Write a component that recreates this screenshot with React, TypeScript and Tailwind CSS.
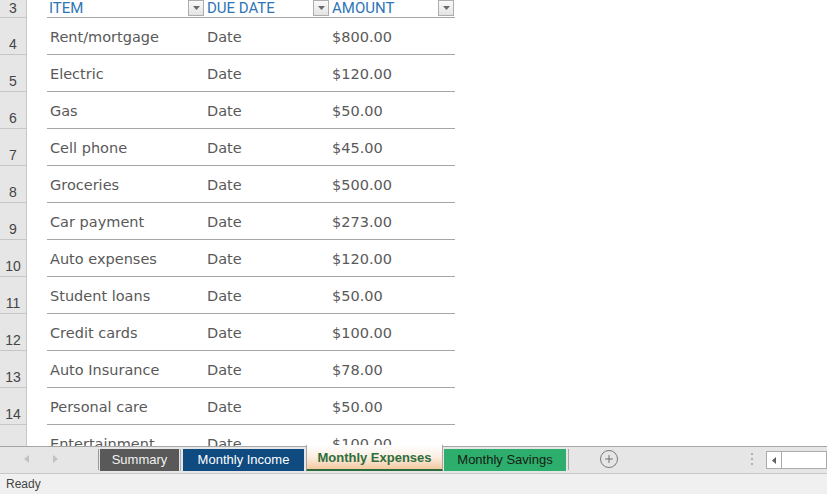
import { Plus } from 'lucide-react'

const rows = [
  { n: 4, item: 'Rent/mortgage', amount: '$800.00' },
  { n: 5, item: 'Electric', amount: '$120.00' },
  { n: 6, item: 'Gas', amount: '$50.00' },
  { n: 7, item: 'Cell phone', amount: '$45.00' },
  { n: 8, item: 'Groceries', amount: '$500.00' },
  { n: 9, item: 'Car payment', amount: '$273.00' },
  { n: 10, item: 'Auto expenses', amount: '$120.00' },
  { n: 11, item: 'Student loans', amount: '$50.00' },
  { n: 12, item: 'Credit cards', amount: '$100.00' },
  { n: 13, item: 'Auto Insurance', amount: '$78.00' },
  { n: 14, item: 'Personal care', amount: '$50.00' },
  { n: 15, item: 'Entertainment', amount: '$100.00' },
]

function FilterButton() {
  return (
    <div className="w-[16px] h-[16px] mb-px border border-[#adadad] bg-gradient-to-b from-[#fafafa] to-[#e4e4e4] flex items-center justify-center shrink-0">
      <svg width="7" height="4" viewBox="0 0 7 4">
        <path d="M0 0 L7 0 L3.5 4 Z" fill="#6a6a6a" />
      </svg>
    </div>
  )
}

function HeaderCell({ label, width }: { label: string; width: string }) {
  return (
    <div className={`${width} h-[18px] flex items-end justify-between pl-[2px] pr-[1px] border-b border-[#a6a6a6]`}>
      <span
        className="text-[15px] leading-[17px] text-[#2e75b6]"
        style={{ fontFamily: 'Roboto, sans-serif' }}
      >
        {label}
      </span>
      <FilterButton />
    </div>
  )
}

function Tab({ label, className }: { label: string; className: string }) {
  return (
    <div className={`h-[22px] flex items-center justify-center text-[13px] ${className}`}>
      {label}
    </div>
  )
}

export default function App() {
  return (
    <div
      className="w-[827px] h-[494px] flex flex-col overflow-hidden bg-white"
      style={{ fontFamily: '"Liberation Sans", Arial, sans-serif' }}
    >
      {/* sheet grid */}
      <div className="h-[446px] overflow-hidden flex flex-col">
        <div className="h-[18px] flex shrink-0">
          <div className="w-[27px] shrink-0 bg-[#e6e6e6] border-r border-b border-[#c6c6c6] flex items-end justify-center text-[14px] leading-none pb-[2px] text-[#444]">
            3
          </div>
          <div className="w-[20px] shrink-0" />
          <HeaderCell label="ITEM" width="w-[158px]" />
          <HeaderCell label="DUE DATE" width="w-[125px]" />
          <HeaderCell label="AMOUNT" width="w-[125px]" />
        </div>
        {rows.map((r) => (
          <div key={r.n} className="h-[37px] flex shrink-0">
            <div className="w-[27px] shrink-0 bg-[#e6e6e6] border-r border-b border-[#c6c6c6] flex items-end justify-center text-[14px] leading-none pb-[3px] text-[#444]">
              {r.n < 15 ? r.n : ''}
            </div>
            <div className="w-[20px] shrink-0" />
            <div
              className="flex border-b border-[#a6a6a6] text-[#595959] text-[14.5px] pt-[3px]"
              style={{ fontFamily: '"DejaVu Sans", sans-serif' }}
            >
              <div className="w-[158px] pl-[3px] flex items-center">{r.item}</div>
              <div className="w-[125px] pl-[2px] flex items-center">Date</div>
              <div className="w-[125px] pl-[2px] flex items-center">{r.amount}</div>
            </div>
          </div>
        ))}
      </div>

      {/* sheet tabs */}
      <div className="h-[28px] shrink-0 bg-[#e6e6e6] flex items-start border-b border-[#c8c8c8] relative">
        <div className="absolute left-0 right-0 top-0 h-px bg-[#a6a6a6]" />
        <div className="w-[98px] h-[26px] flex items-center pl-[24px] gap-[24px]">
          <svg width="5" height="8" viewBox="0 0 5 8">
            <path d="M5 0 L0 4 L5 8 Z" fill="#c2c2c2" />
          </svg>
          <svg width="5" height="8" viewBox="0 0 5 8">
            <path d="M0 0 L5 4 L0 8 Z" fill="#c2c2c2" />
          </svg>
        </div>
        <div className="w-px h-[21px] mt-[3px] bg-[#9a9a9a]" />
        <div className="flex items-start mt-[3px] ml-[1px]">
          <Tab label="Summary" className="w-[79px] bg-[#595959] text-[#f2f2f2]" />
          <div className="w-px h-[22px] mx-[1px] bg-[#b0b0b0]" />
          <Tab label="Monthly Income" className="w-[121px] ml-[1px] bg-[#0f4a80] text-white" />
        </div>
        <div className="relative z-10 -mt-px ml-[2px] w-[137px] h-[26px] border-x border-[#a6a6a6] bg-gradient-to-b from-white via-[#fbeee2] to-[#f3c9a1] border-b-2 border-b-[#2c6b3a] flex items-center justify-center text-[13px] font-bold text-[#2e6e3c] pt-[1px]">
          Monthly Expenses
        </div>
        <div className="flex items-start mt-[3px] ml-[1px]">
          <Tab label="Monthly Savings" className="w-[122px] bg-[#2eae6c] text-[#152015]" />
          <div className="w-px h-[21px] ml-[2px] bg-[#a8a8a8]" />
        </div>
        <div className="ml-[31px] mt-[4px] w-[18px] h-[18px] rounded-full border border-[#7a7a7a] flex items-center justify-center text-[#6e6e6e]">
          <Plus size={12} strokeWidth={2} />
        </div>
        <div className="ml-[133px] mt-[7px] flex flex-col gap-[3px]">
          <div className="w-[2px] h-[2px] bg-[#b0b0b0]" />
          <div className="w-[2px] h-[2px] bg-[#b0b0b0]" />
          <div className="w-[2px] h-[2px] bg-[#b0b0b0]" />
        </div>
        <div className="ml-[13px] mt-[5px] flex-1 h-[18px] bg-white border border-[#ababab] flex">
          <div className="w-[15px] h-full border-r border-[#ababab] flex items-center justify-center">
            <svg width="4" height="7" viewBox="0 0 4 7">
              <path d="M4 0 L0 3.5 L4 7 Z" fill="#606060" />
            </svg>
          </div>
        </div>
      </div>

      {/* status bar */}
      <div className="flex-1 bg-[#f0f0f0] flex items-center pl-[6px] text-[12px] text-[#444]">
        Ready
      </div>
    </div>
  )
}
